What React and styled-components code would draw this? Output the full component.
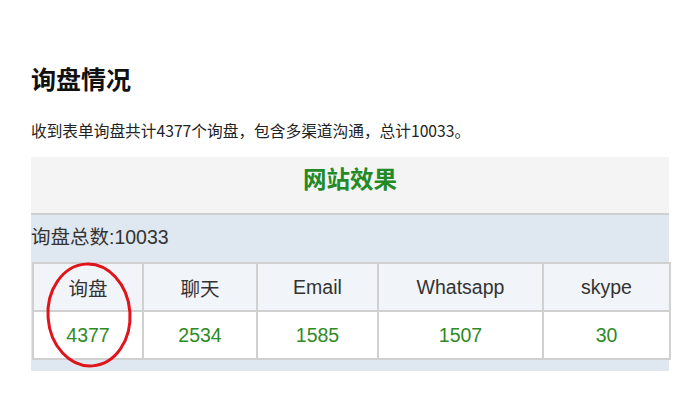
import React from "react";
import styled, { createGlobalStyle } from "styled-components";

const Global = createGlobalStyle`
  html, body { margin: 0; padding: 0; background: #fff; }
  body { font-family: "Noto Sans CJK SC", "Noto Sans", sans-serif; color: #222; }
`;

const Page = styled.div`
  padding: 62px 0 0 31px;
  width: 638px;
`;

const Heading = styled.h2`
  margin: 0;
  font-size: 25px;
  line-height: 32px;
  font-weight: 700;
  color: #111;
`;

const Intro = styled.p`
  margin: 26px 0 0 0;
  font-size: 15.7px;
  line-height: 22px;
  color: #222;
`;

const Shot = styled.div`
  position: relative;
  margin-top: 15px;
  width: 638px;
  padding-bottom: 11px;
  background: #dfe8f0;
  font-family: "Liberation Sans", "Noto Sans CJK SC", sans-serif;
`;

const TitleBand = styled.div`
  height: 58px;
  box-sizing: border-box;
  background: #f4f4f4;
  border-bottom: 2px solid #cfd0d0;
  text-align: center;
  padding-top: 5px;
  font-size: 23.5px;
  line-height: 32px;
  font-weight: 700;
  color: #238a26;
  font-family: "Noto Sans CJK SC", sans-serif;
`;

const TotalBand = styled.div`
  height: 47px;
  box-sizing: border-box;
  padding-top: 8px;
  font-size: 19.5px;
  line-height: 28px;
  color: #333;
  font-family: "Liberation Sans", "Noto Sans CJK SC", sans-serif;
`;

const Table = styled.table`
  margin-left: 1px;
  border-collapse: collapse;
  table-layout: fixed;
  width: 637px;
`;

const Cell = styled.td`
  border: 2px solid #d0d0d0;
  text-align: center;
  height: 46px;
  padding: 0;
  font-size: 19.5px;
  background: ${(p) => (p.$head ? "#f1f4f8" : "#ffffff")};
  color: ${(p) => (p.$head ? "#333" : "#2e8a22")};
  font-family: "Liberation Sans", "Noto Sans CJK SC", sans-serif;
`;

const Ring = styled.svg`
  position: absolute;
  left: 14px;
  top: 105px;
  overflow: visible;
`;

const cols = [110, 114, 121, 165, 127];
const heads = ["询盘", "聊天", "Email", "Whatsapp", "skype"];
const vals = ["4377", "2534", "1585", "1507", "30"];

export default function App() {
  return (
    <Page>
      <Global />
      <Heading>询盘情况</Heading>
      <Intro>收到表单询盘共计4377个询盘，包含多渠道沟通，总计10033。</Intro>
      <Shot>
        <TitleBand>网站效果</TitleBand>
        <TotalBand>询盘总数:10033</TotalBand>
        <Table>
          <colgroup>
            {cols.map((w, i) => (
              <col key={i} style={{ width: w }} />
            ))}
          </colgroup>
          <tbody>
            <tr>
              {heads.map((h) => (
                <Cell key={h} $head>{h}</Cell>
              ))}
            </tr>
            <tr>
              {vals.map((v, i) => (
                <Cell key={i}>{v}</Cell>
              ))}
            </tr>
          </tbody>
        </Table>
        <Ring width="88" height="106" viewBox="0 0 88 106">
          <ellipse cx="44" cy="53" rx="41" ry="51" fill="none" stroke="#e0141b" strokeWidth="3" transform="rotate(-4 44 53)" />
        </Ring>
      </Shot>
    </Page>
  );
}
